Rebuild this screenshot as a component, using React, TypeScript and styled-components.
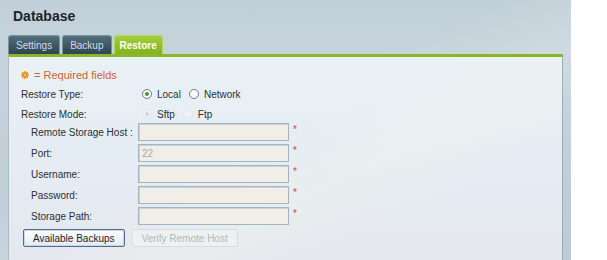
import React from "react";
import styled, { createGlobalStyle } from "styled-components";

const Global = createGlobalStyle`
  html, body { margin: 0; padding: 0; background: #ffffff; }
  body { font-family: "Liberation Sans", Arial, sans-serif; }
`;

const Page = styled.div`
  width: 571px;
  height: 260px;
  box-sizing: border-box;
  padding: 0 8px;
  display: flex;
  flex-direction: column;
  overflow: hidden;
  background:
    linear-gradient(160deg, rgba(255,255,255,0) 40%, rgba(255,255,255,0.18) 55%, rgba(255,255,255,0) 70%),
    linear-gradient(180deg, #c2d1d9 0%, #c6d3dc 30%, #bccbd5 100%);
`;

const Title = styled.h1`
  margin: 0;
  padding: 8px 0 0 5px;
  height: 35px;
  box-sizing: border-box;
  font-size: 14px;
  line-height: 16px;
  font-weight: bold;
  color: #1e2428;
`;

const TabBar = styled.div`
  display: flex;
  gap: 2px;
  height: 19px;
  align-items: flex-end;
`;

const Tab = styled.div<{ $active?: boolean }>`
  height: 19px;
  box-sizing: border-box;
  padding: 0 ${(p) => (p.$active ? "5px" : "7px")};
  display: flex;
  align-items: center;
  font-size: 10px;
  border-radius: 3px 3px 0 0;
  border: 1px solid ${(p) => (p.$active ? "#b4d766" : "#7c939d")};
  border-bottom: none;
  font-weight: ${(p) => (p.$active ? "bold" : "normal")};
  color: ${(p) => (p.$active ? "#ffffff" : "#d5dee2")};
  background: ${(p) =>
    p.$active
      ? "linear-gradient(180deg, #a6cf3e 0%, #8fbe26 55%, #84b41e 100%)"
      : "linear-gradient(180deg, #54707c 0%, #3e5965 50%, #2f4650 100%)"};
`;

const Panel = styled.div`
  flex: 1;
  border-top: 3px solid #8ab72a;
  border-left: 1px solid #a9bcc6;
  border-right: 1px solid #98adb8;
  background:
    linear-gradient(155deg, rgba(255,255,255,0) 45%, rgba(236,242,236,0.5) 60%, rgba(255,255,255,0) 75%),
    linear-gradient(180deg, #eaf1f5 0%, #e5edf4 45%, #e5e7ee 100%);
  padding: 11px 12px 0 12px;
  display: flex;
  flex-direction: column;
  font-size: 10px;
  color: #2a2f33;
`;

const Required = styled.div`
  display: flex;
  align-items: center;
  gap: 5px;
  height: 14px;
  font-size: 11px;
  color: #d2602c;
`;

const FieldRow = styled.div`
  display: grid;
  grid-template-columns: 121px auto;
  align-items: center;
  height: 14px;
  margin-top: 5px;
  & + & { margin-top: 6px; }
`;

const RadioGroup = styled.div`
  display: flex;
  align-items: center;
`;

const RadioLabel = styled.label`
  display: flex;
  align-items: center;
  gap: 5px;
  margin-right: 8px;
`;

const RadioDot = styled.span<{ $checked?: boolean; $disabled?: boolean }>`
  width: 10px;
  height: 10px;
  border-radius: 50%;
  box-sizing: border-box;
  border: 1px solid ${(p) => (p.$disabled ? "#dfe5ea" : "#6a7a86")};
  background: ${(p) => (p.$disabled ? "#eef2f5" : "#ffffff")};
  display: flex;
  align-items: center;
  justify-content: center;
  &::after {
    content: "";
    display: ${(p) => (p.$checked ? "block" : "none")};
    width: 4px;
    height: 4px;
    border-radius: 50%;
    background: ${(p) => (p.$disabled ? "#cfd6dc" : "#3b9a3b")};
  }
`;

const SubFields = styled.div`
  display: flex;
  flex-direction: column;
  gap: 3px;
  margin-top: 2px;
  padding-left: 10px;
`;

const InputRow = styled.div`
  display: grid;
  grid-template-columns: 107px 151px auto;
  align-items: center;
  height: 18px;
`;

const TextInput = styled.input<{ $muted?: boolean }>`
  width: 151px;
  height: 18px;
  box-sizing: border-box;
  margin: 0;
  padding: 0 3px;
  border: 1px solid #a3b5c3;
  box-shadow: inset 1px 1px 0 #c9d3db;
  background: #f1ede7;
  font-family: "Liberation Sans", Arial, sans-serif;
  font-size: 10px;
  color: ${(p) => (p.$muted ? "#a9a9a9" : "#2a2f33")};
  outline: none;
`;

const Star = styled.span`
  align-self: start;
  margin-left: 4px;
  margin-top: 2px;
  color: #e23a4c;
  font-size: 10px;
  line-height: 10px;
`;

const Buttons = styled.div`
  display: flex;
  gap: 7px;
  margin-top: 4px;
  padding-left: 2px;
`;

const Button = styled.button<{ $disabled?: boolean }>`
  height: 18px;
  box-sizing: border-box;
  padding: 0 9px;
  font-family: "Liberation Sans", Arial, sans-serif;
  font-size: 10px;
  border-radius: 2px;
  border: 1px solid ${(p) => (p.$disabled ? "#d6dcdf" : "#4d6e92")};
  background: ${(p) =>
    p.$disabled
      ? "#eef1f1"
      : "linear-gradient(180deg, #ffffff 0%, #f2f5f8 50%, #e2e9ef 100%)"};
  color: ${(p) => (p.$disabled ? "#b1b8bc" : "#1e2326")};
  box-shadow: ${(p) => (p.$disabled ? "none" : "inset 0 0 0 1px #c9d7e5")};
`;

const Gear = () => (
  <svg width="8" height="8" viewBox="0 0 8 8">
    <g fill="#ec8a1a">
      <circle cx="4" cy="4" r="2.6" />
      <rect x="3.3" y="0" width="1.4" height="8" />
      <rect x="0" y="3.3" width="8" height="1.4" />
      <rect x="3.3" y="0" width="1.4" height="8" transform="rotate(45 4 4)" />
      <rect x="3.3" y="0" width="1.4" height="8" transform="rotate(-45 4 4)" />
    </g>
    <circle cx="4" cy="4" r="1" fill="#f6d28a" />
  </svg>
);

const fields = [
  { label: "Remote Storage Host :", value: "" },
  { label: "Port:", value: "22" },
  { label: "Username:", value: "" },
  { label: "Password:", value: "" },
  { label: "Storage Path:", value: "" },
];

export default function App() {
  return (
    <>
      <Global />
      <Page>
        <Title>Database</Title>
        <TabBar>
          <Tab>Settings</Tab>
          <Tab>Backup</Tab>
          <Tab $active>Restore</Tab>
        </TabBar>
        <Panel>
          <Required>
            <Gear />
            <span>= Required fields</span>
          </Required>
          <FieldRow>
            <span>Restore Type:</span>
            <RadioGroup>
              <RadioLabel>
                <RadioDot $checked />
                Local
              </RadioLabel>
              <RadioLabel>
                <RadioDot />
                Network
              </RadioLabel>
            </RadioGroup>
          </FieldRow>
          <FieldRow>
            <span>Restore Mode:</span>
            <RadioGroup>
              <RadioLabel>
                <RadioDot $checked $disabled />
                Sftp
              </RadioLabel>
              <RadioLabel>
                <RadioDot $disabled />
                Ftp
              </RadioLabel>
            </RadioGroup>
          </FieldRow>
          <SubFields>
            {fields.map((f) => (
              <InputRow key={f.label}>
                <span>{f.label}</span>
                <TextInput readOnly value={f.value} $muted={f.value !== ""} />
                <Star>*</Star>
              </InputRow>
            ))}
          </SubFields>
          <Buttons>
            <Button>Available Backups</Button>
            <Button $disabled disabled>
              Verify Remote Host
            </Button>
          </Buttons>
        </Panel>
      </Page>
    </>
  );
}
